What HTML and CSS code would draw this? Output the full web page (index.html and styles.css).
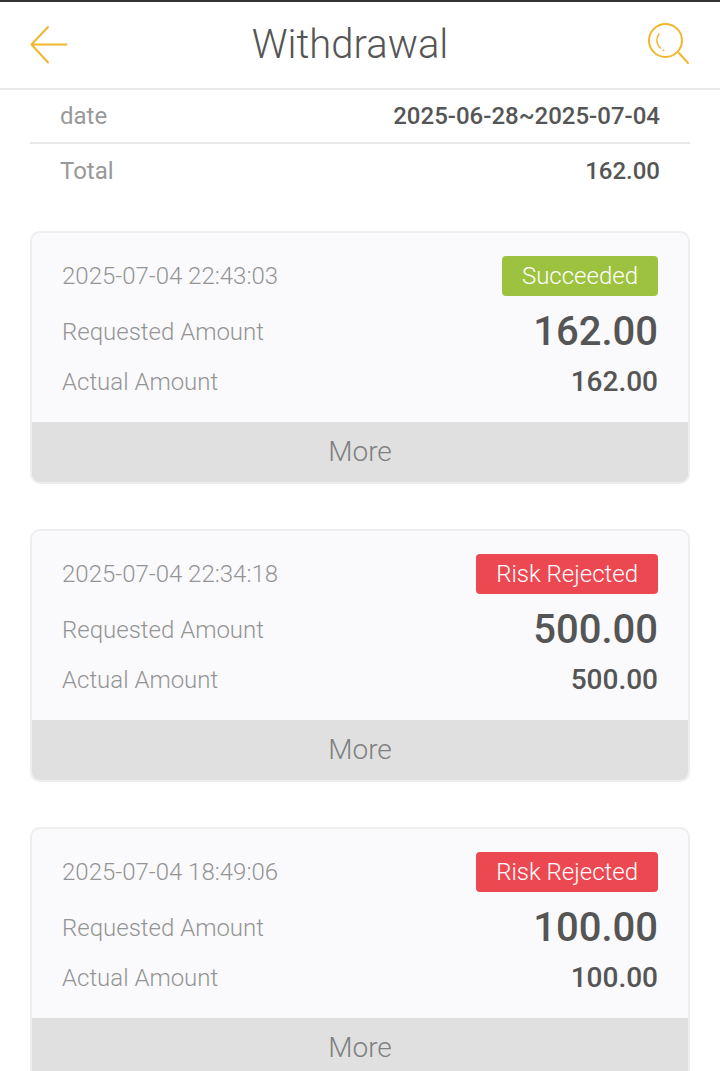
FILE: index.html
```html
<!DOCTYPE html>
<html lang="en">
<head>
<meta charset="utf-8">
<title>Withdrawal</title>
<link rel="stylesheet" href="styles.css">
</head>
<body>
<div class="statusline"></div>
<header class="topbar">
  <svg class="icon" width="40" height="40" viewBox="0 0 40 40" fill="none" stroke="#f0b72c" stroke-width="2" stroke-linecap="round" stroke-linejoin="round"><path d="M18 2 L1.5 19.5 L18 37.5 M1.5 19.5 H36.5"/></svg>
  <h1 class="title">Withdrawal</h1>
  <svg class="icon" width="44" height="44" viewBox="0 0 44 44" fill="none" stroke="#f0b72c" stroke-linecap="round"><circle cx="19.5" cy="17.5" r="16.5" stroke-width="2"/><path d="M33 30 L42 40" stroke-width="2"/><path d="M13 11 C10 15 10 21 14.5 25" stroke-width="1.5"/><path d="M17 27 L17.8 27.4" stroke-width="1.5"/></svg>
</header>
<section class="summary">
  <div class="sumrow"><span class="sumlabel">date</span><span class="sumvalue">2025-06-28~2025-07-04</span></div>
  <div class="sumrow sumrow-last"><span class="sumlabel">Total</span><span class="sumvalue">162.00</span></div>
</section>
<main class="list">
  <article class="card">
    <div class="body">
      <div class="row row-top"><span class="label">2025-07-04 22:43:03</span><span class="badge badge-ok">Succeeded</span></div>
      <div class="row row-mid"><span class="label">Requested Amount</span><span class="big">162.00</span></div>
      <div class="row row-low"><span class="label">Actual Amount</span><span class="amount">162.00</span></div>
    </div>
    <div class="more">More</div>
  </article>
  <article class="card">
    <div class="body">
      <div class="row row-top"><span class="label">2025-07-04 22:34:18</span><span class="badge badge-bad">Risk Rejected</span></div>
      <div class="row row-mid"><span class="label">Requested Amount</span><span class="big">500.00</span></div>
      <div class="row row-low"><span class="label">Actual Amount</span><span class="amount">500.00</span></div>
    </div>
    <div class="more">More</div>
  </article>
  <article class="card">
    <div class="body">
      <div class="row row-top"><span class="label">2025-07-04 18:49:06</span><span class="badge badge-bad">Risk Rejected</span></div>
      <div class="row row-mid"><span class="label">Requested Amount</span><span class="big">100.00</span></div>
      <div class="row row-low"><span class="label">Actual Amount</span><span class="amount">100.00</span></div>
    </div>
    <div class="more">More</div>
  </article>
</main>
</body>
</html>
```

FILE: styles.css
```css
* { box-sizing: border-box; }
html, body { margin: 0; padding: 0; height: 1071px; overflow: hidden; background: #fff; }
body { font-family: Roboto, "Liberation Sans", sans-serif; color: #555; }
.statusline { height: 2px; background: #333; }
.topbar { height: 88px; border-bottom: 2px solid #e8e8e8; padding: 0 30px; display: flex; align-items: center; justify-content: space-between; }
.icon { display: block; flex: none; }
.title { margin: 0 16px 0 0; font-size: 40px; font-weight: 300; color: #555; line-height: 1; }
.summary { margin: 0 30px; }
.sumrow { height: 54px; padding: 0 30px; border-bottom: 2px solid #e8e8e8; display: flex; align-items: center; justify-content: space-between; font-size: 24px; }
.sumrow-last { border-bottom: 0; }
.sumlabel { color: #999; }
.sumvalue { color: #555; font-weight: 500; }
.list { margin: 33px 30px 0; display: flex; flex-direction: column; gap: 45px; }
.card { height: 253px; flex: none; background: #fafafc; border: 2px solid #eeeeee; border-radius: 10px; overflow: hidden; display: flex; flex-direction: column; }
.body { flex: 1; padding: 23px 30px 0; }
.row { display: flex; align-items: center; justify-content: space-between; }
.row-top { height: 40px; }
.row-mid { height: 52px; margin-top: 10px; }
.row-low { height: 40px; margin-top: 4px; }
.label { font-size: 24px; font-weight: 300; color: #949494; }
.badge { height: 40px; padding: 0 20px; border-radius: 4px; color: #fff; font-size: 24px; font-weight: 300; display: flex; align-items: center; }
.badge-ok { background: #9dc23f; }
.badge-bad { background: #ec4852; }
.big { font-size: 40px; font-weight: 500; color: #555; margin-bottom: 2px; }
.amount { font-size: 28px; font-weight: 500; color: #555; margin-bottom: 2px; }
.more { height: 60px; flex: none; background: #e0e0e0; padding-bottom: 2px; display: flex; align-items: center; justify-content: center; font-size: 28px; font-weight: 300; color: #808080; }
```
